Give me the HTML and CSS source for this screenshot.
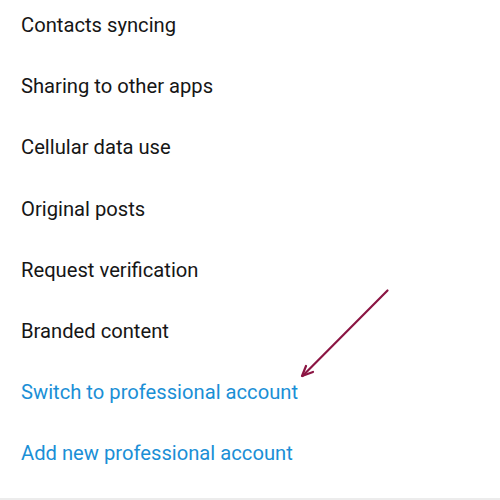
FILE: index.html
```html
<!DOCTYPE html>
<html>
<head>
<meta charset="utf-8">
<link rel="stylesheet" href="styles.css">
</head>
<body>
<div class="screen">
  <ul class="menu">
    <li class="item">Contacts syncing</li>
    <li class="item">Sharing to other apps</li>
    <li class="item">Cellular data use</li>
    <li class="item">Original posts</li>
    <li class="item">Request verification</li>
    <li class="item">Branded content</li>
    <li class="item link">Switch to professional account</li>
    <li class="item link">Add new professional account</li>
  </ul>
  <svg class="arrow" width="500" height="500" viewBox="0 0 500 500">
    <g stroke="#8b1543" stroke-width="2.2" stroke-linecap="round" fill="none">
      <line x1="387.5" y1="290.5" x2="302.5" y2="376"/>
      <polyline points="306,366 302,376 313,372" stroke-linejoin="round"/>
    </g>
  </svg>
</div>
</body>
</html>
```

FILE: styles.css
```css
html, body {
  margin: 0;
  padding: 0;
  background: #ffffff;
}
.screen {
  position: relative;
  width: 500px;
  height: 500px;
  overflow: hidden;
  box-sizing: border-box;
  border-bottom: 2px solid #ececec;
}
.menu {
  list-style: none;
  margin: 0;
  padding: 13px 0 0 21px;
  display: flex;
  flex-direction: column;
  gap: 37.2px;
}
.item {
  font-family: Roboto, "Liberation Sans", sans-serif;
  font-size: 20.2px;
  line-height: 24px;
  color: #161616;
}
.link {
  color: #1b8fd6;
}
.arrow {
  position: absolute;
  left: 0;
  top: 0;
}
```
